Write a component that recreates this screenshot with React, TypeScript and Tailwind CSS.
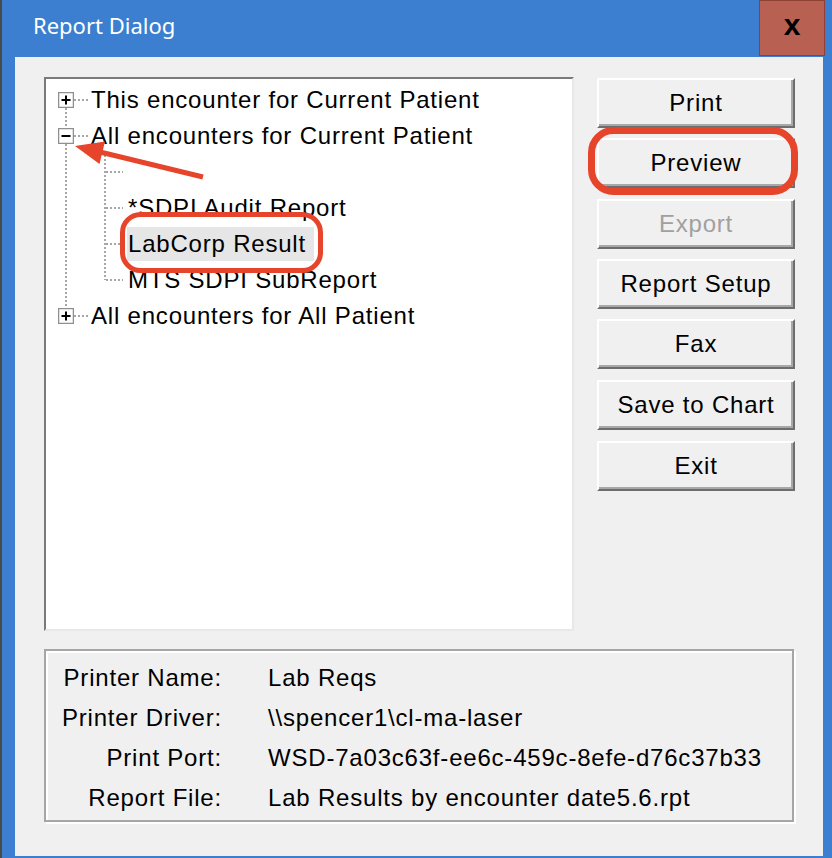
import React from "react";

const FONT = "font-['Liberation_Sans',Arial,sans-serif]";

function Expander({ minus }: { minus?: boolean }) {
  return (
    <svg width="16" height="16" viewBox="0 0 16 16" className="relative z-10 shrink-0">
      <rect x="0.5" y="0.5" width="15" height="15" fill="#fff" stroke="#8f8f8f" strokeWidth="1.5" />
      <rect x="3.5" y="7" width="9" height="2" fill="#000" />
      {!minus && <rect x="7" y="3.5" width="2" height="9" fill="#000" />}
    </svg>
  );
}

function TopRow({ label, minus }: { label: string; minus?: boolean }) {
  return (
    <div className="flex h-[36px] items-center pl-[12px]">
      <Expander minus={minus} />
      <span className="ml-[17px] whitespace-nowrap">{label}</span>
    </div>
  );
}

function ChildRow({ label, selected }: { label: string; selected?: boolean }) {
  return (
    <div className="flex h-[36px] items-center pl-[81px]">
      {label && (
        <span
          className={
            "whitespace-nowrap px-[1px] leading-[34px] " + (selected ? "bg-[#e6e6e6] pr-[8px]" : "")
          }
        >
          {label}
        </span>
      )}
    </div>
  );
}

function WinButton({ label, disabled, className }: { label: string; disabled?: boolean; className?: string }) {
  return (
    <div
      className={
        "flex h-[50px] w-[198px] items-center justify-center border-2 border-t-white border-l-white border-b-[#6d6d6d] border-r-[#6d6d6d] bg-[#f0f0f0] pb-[1px] shadow-[inset_-2px_-2px_0_#a8a8a8] " +
        (disabled ? "text-[#a0a0a0] " : "text-black ") +
        (className ?? "")
      }
    >
      {label}
    </div>
  );
}

function InfoRow({ label, value }: { label: string; value: string }) {
  return (
    <div className="flex h-[40px] items-center">
      <div className="w-[176px] shrink-0 whitespace-nowrap text-right">{label}</div>
      <div className="ml-[46px] w-[503px] whitespace-nowrap">{value}</div>
    </div>
  );
}

export default function App() {
  const dots = "2 2";
  return (
    <div className={"relative h-[858px] w-[832px] overflow-hidden border-l-2 border-[#4a4a4a] bg-[#3c7fd0] " + FONT}>
      {/* Title bar */}
      <div className="flex h-[57px] items-start">
        <div className="pl-[31px] pt-[10px] font-['Noto_Sans',sans-serif] text-[22px] leading-[30px] text-white">
          Report Dialog
        </div>
        <div className="ml-auto mr-[7px] flex h-[56px] w-[66px] items-center justify-center border border-[#8e4236] bg-[#b86052] pb-[6px] text-[30px] font-bold leading-none text-black">
          x
        </div>
      </div>

      {/* Client area */}
      <div className="ml-[13px] h-[799px] w-[808px] bg-[#f0f0f0] pl-[29px] pt-[20px] text-[24px] tracking-[0.8px] text-black">
        <div className="flex">
          {/* Tree view */}
          <div className="relative h-[554px] w-[530px] border-2 border-t-[#7a7a7a] border-l-[#7a7a7a] border-b-[#e8e8e8] border-r-[#e8e8e8] bg-white">
            <svg className="absolute left-0 top-0" width="526" height="300" viewBox="0 0 526 300">
              <g stroke="#8a8a8a" strokeWidth="1.5" strokeDasharray={dots} fill="none">
                <line x1="20" y1="29" x2="20" y2="229" />
                <line x1="28" y1="21" x2="42" y2="21" />
                <line x1="28" y1="57" x2="42" y2="57" />
                <line x1="28" y1="237" x2="42" y2="237" />
                <line x1="59" y1="76" x2="59" y2="201" />
                <line x1="60" y1="93" x2="77" y2="93" />
                <line x1="60" y1="129" x2="77" y2="129" />
                <line x1="60" y1="165" x2="77" y2="165" />
                <line x1="60" y1="201" x2="77" y2="201" />
              </g>
            </svg>
            <div className="relative pt-[3px]">
              <TopRow label="This encounter for Current Patient" />
              <TopRow label="All encounters for Current Patient" minus />
              <ChildRow label="" />
              <ChildRow label="*SDPI Audit Report" />
              <ChildRow label="LabCorp Result" selected />
              <ChildRow label="MTS SDPI SubReport" />
              <TopRow label="All encounters for All Patient" />
            </div>
          </div>

          {/* Buttons */}
          <div className="ml-[23px] flex flex-col pt-[1px]">
            <WinButton label="Print" />
            <WinButton label="Preview" className="mt-[10px]" />
            <WinButton label="Export" disabled className="mt-[11px]" />
            <WinButton label="Report Setup" className="mt-[10px]" />
            <WinButton label="Fax" className="mt-[10px]" />
            <WinButton label="Save to Chart" className="mt-[11px]" />
            <WinButton label="Exit" className="mt-[11px]" />
          </div>
        </div>

        {/* Printer info group */}
        <div className="mt-[18px] h-[173px] w-[750px] border-2 border-[#a6a6a6] pt-[7px] shadow-[inset_2px_2px_0_#fff,2px_2px_0_#fff]">
          <InfoRow label="Printer Name:" value="Lab Reqs" />
          <InfoRow label="Printer Driver:" value="\\spencer1\cl-ma-laser" />
          <InfoRow label="Print Port:" value="WSD-7a03c63f-ee6c-459c-8efe-d76c37b33" />
          <InfoRow label="Report File:" value="Lab Results by encounter date5.6.rpt" />
        </div>
      </div>

      {/* Red annotations */}
      <svg className="pointer-events-none absolute left-[-2px] top-0" width="832" height="858" viewBox="0 0 832 858">
        <g fill="none" stroke="#e6452b">
          <rect x="122.5" y="214.5" width="198" height="56" rx="18" strokeWidth="5" />
          <rect x="591.5" y="130.5" width="203" height="61" rx="22" strokeWidth="7" />
          <line x1="203" y1="177" x2="98" y2="151.5" strokeWidth="5" />
        </g>
        <polygon points="75,146 105,141.5 99.5,164" fill="#e6452b" />
      </svg>
    </div>
  );
}
